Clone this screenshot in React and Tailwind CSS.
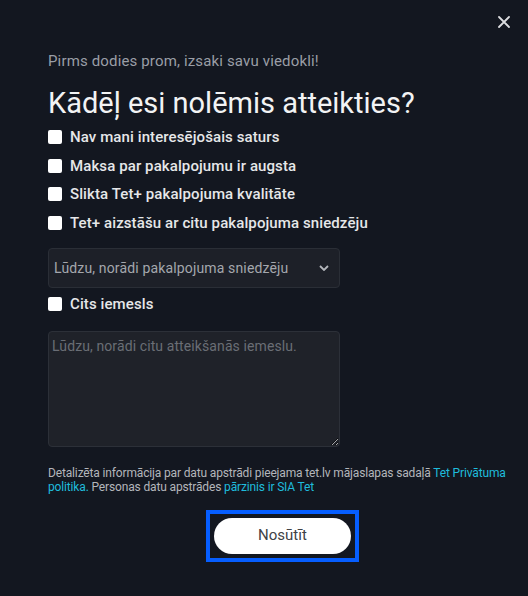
import React from 'react';

const reasons = [
  "Nav mani interesējošais saturs",
  "Maksa par pakalpojumu ir augsta",
  "Slikta Tet+ pakalpojuma kvalitāte",
  "Tet+ aizstāšu ar citu pakalpojuma sniedzēju"
];

const Check = ({ label }) => (
  <label className="flex items-center h-[28.5px] gap-[8px]">
    <span className="w-[14px] h-[14px] bg-white rounded-[2px] shrink-0" />
    <span className="text-[15px] font-medium text-[#e6e7e9] tracking-[0.1px]">{label}</span>
  </label>
);

export default function App() {
  return (
    <div className="relative w-[528px] h-[596px] bg-[#131720] font-['Roboto',sans-serif] overflow-hidden">
      {/* close */}
      <button className="absolute top-[16px] right-[18px] w-[12px] h-[12px]">
        <svg viewBox="0 0 12 12" width="12" height="12" stroke="#dcdde0" strokeWidth="1.8" strokeLinecap="round">
          <path d="M1 1 L11 11 M11 1 L1 11" />
        </svg>
      </button>

      <div className="pl-[48px] pr-[16px] pt-[51px]">
        <p className="text-[15px] leading-[20px] text-[#9a9ea6] tracking-[0.15px]">Pirms dodies prom, izsaki savu viedokli!</p>
        <h1 className="mt-[15px] text-[29px] leading-[34px] text-[#f2f3f4]">Kādēļ esi nolēmis atteikties?</h1>

        <div className="mt-[3px] flex flex-col">
          {reasons.map((r, i) => (
            <Check key={i} label={r} />
          ))}
        </div>

        <div className="mt-[11px] w-[292px] h-[40px] flex items-center justify-between pl-[5px] pr-[10px] bg-[#1d2028] border border-[#2a2e36] rounded-[4px]">
          <span className="text-[14px] text-[#a4a7ad] tracking-[0.15px]">Lūdzu, norādi pakalpojuma sniedzēju</span>
          <svg width="10" height="6" viewBox="0 0 10 6" fill="none" stroke="#b4b7bc" strokeWidth="1.8">
            <path d="M1 1 L5 5 L9 1" />
          </svg>
        </div>

        <div className="mt-[2px]">
          <Check label="Cits iemesls" />
        </div>

        <textarea
          className="mt-[12px] block w-[292px] h-[116px] bg-[#1f2229] border border-[#2c3038] rounded-[4px] px-[3px] py-[4px] text-[14px] tracking-[0.1px] text-[#ccc] placeholder:text-[#6a6e75] outline-none"
          placeholder="Lūdzu, norādi citu atteikšanās iemeslu."
        />

        <p className="mt-[19px] text-[12px] leading-[14px] tracking-[-0.15px] text-[#b3b6bb]">
          Detalizēta informācija par datu apstrādi pieejama tet.lv mājaslapas sadaļā{' '}
          <a className="text-[#1fbcdc]">Tet Privātuma politika.</a> Personas datu apstrādes{' '}
          <a className="text-[#1fbcdc]">pārzinis ir SIA Tet</a>
        </p>

        <div className="mt-[16px] ml-[158px] w-fit border-4 border-[#065eff] p-[4px]">
          <button className="w-[137px] h-[36px] rounded-full bg-white text-[15px] text-[#404246]">
            Nosūtīt
          </button>
        </div>
      </div>
    </div>
  );
}
